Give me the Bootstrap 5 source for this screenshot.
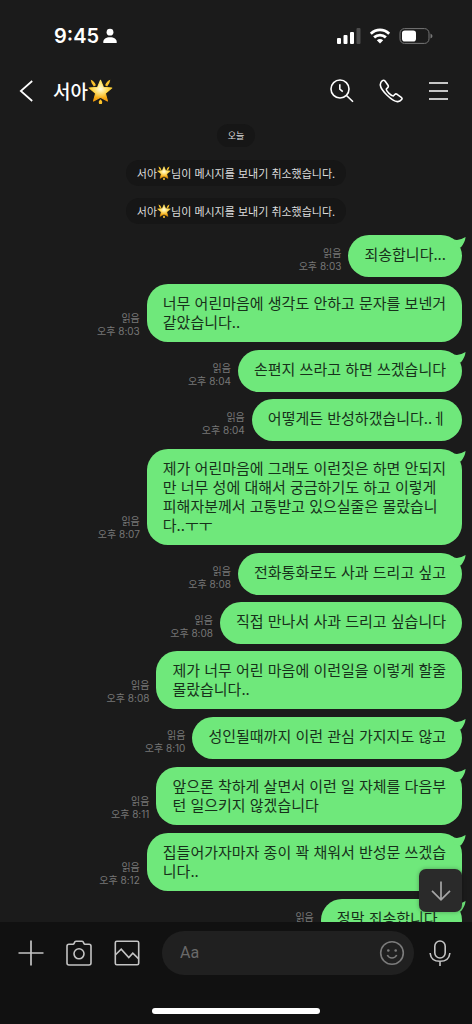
<!DOCTYPE html>
<html lang="ko">
<head>
<meta charset="utf-8">
<meta name="viewport" content="width=device-width, initial-scale=1">
<title>서아</title>
<link href="https://cdn.jsdelivr.net/npm/bootstrap@5.3.0/dist/css/bootstrap.min.css" rel="stylesheet">
<style>
  body { background: #1b1b1b; color: #fff; font-family: "Noto Sans CJK KR", sans-serif; }
  svg { display: block; flex: none; }
  .app-shell { height: 100vh; }
  .icon-btn { background: none; border: 0; padding: 0; color: inherit; display: block; }
  .status-bar { height: 72px; padding: 0 39px 0 54px; }
  .clock { font: 600 20px/24px Inter, sans-serif; }
  .chat-header { height: 38px; padding: 0 23px 0 19px; }
  .chat-name { font-size: 19px; line-height: 28px; font-weight: 500; margin: 0 0 0 19px; }
  .header-actions { gap: 25px; }
  .chat-log { min-height: 0; padding: 14px 10px 0 10px; }
  .notice { background: #161616; color: #dedede; font-size: 11px; line-height: 16px; padding: 5px 11px; border-radius: 13px; }
  .day-pill { background: #161616; color: #dedede; font-size: 9px; line-height: 15px; padding: 4px 11px; border-radius: 12px; margin-bottom: 13px; }
  .notice + .notice { margin-top: 12px; }
  .notices { margin-bottom: 11px; }
  .msg-row { gap: 7px; margin-top: 7px; }
  .msg-row.has-tail { margin-top: 8px; }
  .msg-row:first-child { margin-top: 0; }
  .msg-meta { color: #777; font: 400 10px/13px Inter, "Noto Sans CJK KR", sans-serif; padding-bottom: 4px; }
  .bubble { position: relative; background: #6fe87b; color: #17301a; font-size: 15px; line-height: 19px; padding: 9px 16px 11px; min-height: 42px; border-radius: 21px; white-space: nowrap; margin: 0; }
  .bubble-tail { position: absolute; top: 1px; right: -4px; }
  .jump-btn { position: absolute; right: 10px; bottom: 10px; width: 43px; height: 43px; background: #2a2a2a; border: 0; border-radius: 7px; box-shadow: 0 0 4px rgba(0,0,0,.3); padding: 0; }
  .composer { background: #111; color: #c4c4c4; }
  .composer-bar { padding: 9px 21px 0 18px; }
  .tool-gap { gap: 22px; }
  .msg-box { background: #202020; border-radius: 22px; height: 44px; min-width: 0; margin-left: 22px; margin-right: 15px; padding: 0 9px 0 18px; }
  .msg-box input { background: none; border: 0; outline: 0; color: #fff; width: 100%; min-width: 0; padding: 0; font: 400 16px/20px Roboto, "Noto Sans CJK KR", sans-serif; }
  .msg-box input::placeholder { color: #696969; opacity: 1; }
  .home-bar { width: 168px; height: 6px; border-radius: 3px; background: #fff; margin: 33px auto 10px; }
</style>
</head>
<body>
<svg width="0" height="0" class="position-absolute" aria-hidden="true">
  <defs>
    <linearGradient id="gold" x1="0" y1="0" x2="0" y2="1"><stop offset="0" stop-color="#ffe45c"/><stop offset=".55" stop-color="#ffc928"/><stop offset="1" stop-color="#f29a0c"/></linearGradient>
    <radialGradient id="shine" cx=".5" cy=".42" r=".45"><stop offset="0" stop-color="#fffbe0"/><stop offset="1" stop-color="#fff3a0" stop-opacity="0"/></radialGradient>
    <symbol id="star" viewBox="0 0 24 24">
      <path fill="#fbc22b" d="M2.600.8Q6 2 7.600 6L5.600 7.200Q3 4.500 2.600.8ZM21.400.8Q18 2 16.400 6l2 1.200Q21 4.500 21.400.8ZM12 19.400q2.600 2.200 1.200 4.600h-2.400q-1.400-2.400 1.200-4.600Z"/>
      <path fill="url(#gold)" stroke="url(#gold)" stroke-width="1" stroke-linejoin="round" d="m12 1.200 2.800 6.700 8.100.7-6.200 5.200 2 7.400L12 17.600l-6.700 3.600 2-7.400L1.100 8.600l8.100-.7Z"/>
      <path fill="url(#shine)" d="m12 1.200 2.800 6.700 8.100.7-6.200 5.200 2 7.400L12 17.600l-6.700 3.600 2-7.400L1.100 8.600l8.100-.7Z"/>
    </symbol>
    <symbol id="tail" viewBox="0 0 14 14"><path fill="#6fe87b" d="M0 2.500Q2 4 5 3.900 9.500 3.600 13.600 1 13 6.500 8.800 11.500L2 10Z"/></symbol>
  </defs>
</svg>
<div class="app-shell d-flex flex-column overflow-hidden">
  <header>
    <div class="status-bar d-flex align-items-center justify-content-between">
      <div class="d-flex align-items-center">
        <span class="clock">9:45</span>
        <svg class="ms-1" width="14" height="16" viewBox="0 0 14 16" fill="#fff"><circle cx="7" cy="4.200" r="3.400"/><path d="M.3 15v-1.200C.3 11 3 9.200 7 9.200s6.700 1.800 6.700 4.600V15Z"/></svg>
      </div>
      <div class="d-flex align-items-center">
        <svg width="24" height="16" viewBox="0 0 24 16" fill="#fff"><rect y="10" width="4" height="6" rx="1"/><rect x="6.500" y="7" width="4" height="9" rx="1"/><rect x="13" y="4" width="4" height="12" rx="1"/><rect x="19.500" y="0" width="4" height="16" rx="1" fill="#4c4c4c"/></svg>
        <svg class="ms-2" width="22" height="16" viewBox="0 0 22 16" fill="none" stroke="#fff" stroke-width="2.800"><path d="M1.800 5.700Q6 1.900 11 1.900t9.200 3.800"/><path d="M5.100 9.400Q7.600 7.100 11 7.100t5.900 2.300"/><path fill="#fff" stroke="none" d="M7.800 12.200Q11 10 14.200 12.200L11 15.500Z"/></svg>
        <svg class="ms-2" width="34" height="16" viewBox="0 0 34 16"><rect x="1" y=".6" width="29" height="14.800" rx="4.500" fill="none" stroke="#777"/><rect x="3" y="2.500" width="14" height="11" rx="2.800" fill="#fff"/><path d="M31.500 5.500q2 1 2 2.500t-2 2.500Z" fill="#777"/></svg>
      </div>
    </div>
    <div class="chat-header d-flex align-items-center">
      <button class="icon-btn" aria-label="뒤로"><svg width="15" height="24" viewBox="0 0 15 24" fill="none" stroke="#fff" stroke-width="1.700"><path d="M13.200 2 1.800 12l11.400 10"/></svg></button>
      <h1 class="chat-name d-flex align-items-center">서아<svg width="25" height="25"><use href="#star"/></svg></h1>
      <div class="header-actions d-flex align-items-center ms-auto">
        <button class="icon-btn" aria-label="검색"><svg width="24" height="24" viewBox="0 0 24 24" fill="none" stroke="#fff" stroke-width="1.600"><circle cx="10" cy="10" r="9"/><path d="m16.500 16.500 6.500 6.300M9.800 5.200v5l3 2.500"/></svg></button>
        <button class="icon-btn" aria-label="통화"><svg width="24" height="24" viewBox="0 0 24 24" fill="none" stroke="#fff" stroke-width="1.600" stroke-linejoin="round"><path d="M3.400 1.700Q4.800.7 6 2l3 4.200q.8 1.300-.3 2.500L7.300 10q-.2 1.500 2.700 4.300t4.300 2.700l1.500-1.500q1-1 2.300-.2l4.200 3q1.300 1 .3 2.300-1.700 2.200-4.200 2-4-.2-10.300-6.300T1.300 6.200Q1.100 3.600 3.400 1.700Z"/></svg></button>
        <button class="icon-btn" aria-label="메뉴"><svg width="21" height="24" viewBox="0 0 21 24" fill="none" stroke="#fff" stroke-width="1.600"><path d="M1 4h19M1 12h19M1 20h19"/></svg></button>
      </div>
    </div>
  </header>

  <main class="position-relative flex-grow-1 overflow-hidden chat-log">
    <div class="notices d-flex flex-column align-items-center">
      <div class="day-pill">오늘</div>
      <div class="notice d-flex align-items-center">서아<svg width="14" height="14"><use href="#star"/></svg>님이 메시지를 보내기 취소했습니다.</div>
      <div class="notice d-flex align-items-center">서아<svg width="14" height="14"><use href="#star"/></svg>님이 메시지를 보내기 취소했습니다.</div>
    </div>
    <div>
      <div class="msg-row has-tail d-flex justify-content-end align-items-end"><div class="msg-meta text-end">읽음<br>오후 8:03</div><p class="bubble">죄송합니다...<svg class="bubble-tail" width="14" height="14"><use href="#tail"/></svg></p></div>
      <div class="msg-row d-flex justify-content-end align-items-end"><div class="msg-meta text-end">읽음<br>오후 8:03</div><p class="bubble">너무 어린마음에 생각도 안하고 문자를 보넨거<br>같았습니다..</p></div>
      <div class="msg-row has-tail d-flex justify-content-end align-items-end"><div class="msg-meta text-end">읽음<br>오후 8:04</div><p class="bubble">손편지 쓰라고 하면 쓰겠습니다<svg class="bubble-tail" width="14" height="14"><use href="#tail"/></svg></p></div>
      <div class="msg-row d-flex justify-content-end align-items-end"><div class="msg-meta text-end">읽음<br>오후 8:04</div><p class="bubble">어떻게든 반성하갰습니다..ㅔ</p></div>
      <div class="msg-row has-tail d-flex justify-content-end align-items-end"><div class="msg-meta text-end">읽음<br>오후 8:07</div><p class="bubble">제가 어린마음에 그래도 이런짓은 하면 안되지<br>만 너무 성에 대해서 궁금하기도 하고 이렇게<br>피해자분께서 고통받고 있으실줄은 몰랐습니<br>다..ㅜㅜ<svg class="bubble-tail" width="14" height="14"><use href="#tail"/></svg></p></div>
      <div class="msg-row has-tail d-flex justify-content-end align-items-end"><div class="msg-meta text-end">읽음<br>오후 8:08</div><p class="bubble">전화통화로도 사과 드리고 싶고<svg class="bubble-tail" width="14" height="14"><use href="#tail"/></svg></p></div>
      <div class="msg-row d-flex justify-content-end align-items-end"><div class="msg-meta text-end">읽음<br>오후 8:08</div><p class="bubble">직접 만나서 사과 드리고 싶습니다</p></div>
      <div class="msg-row d-flex justify-content-end align-items-end"><div class="msg-meta text-end">읽음<br>오후 8:08</div><p class="bubble">제가 너무 어린 마음에 이런일을 이렇게 할줄<br>몰랐습니다..</p></div>
      <div class="msg-row has-tail d-flex justify-content-end align-items-end"><div class="msg-meta text-end">읽음<br>오후 8:10</div><p class="bubble">성인될때까지 이런 관심 가지지도 않고<svg class="bubble-tail" width="14" height="14"><use href="#tail"/></svg></p></div>
      <div class="msg-row has-tail d-flex justify-content-end align-items-end"><div class="msg-meta text-end">읽음<br>오후 8:11</div><p class="bubble">앞으론 착하게 살면서 이런 일 자체를 다음부<br>턴 일으키지 않겠습니다<svg class="bubble-tail" width="14" height="14"><use href="#tail"/></svg></p></div>
      <div class="msg-row has-tail d-flex justify-content-end align-items-end"><div class="msg-meta text-end">읽음<br>오후 8:12</div><p class="bubble">집들어가자마자 종이 꽉 채워서 반성문 쓰겠습<br>니다..<svg class="bubble-tail" width="14" height="14"><use href="#tail"/></svg></p></div>
      <div class="msg-row has-tail d-flex justify-content-end align-items-end"><div class="msg-meta text-end">읽음<br>오후 8:12</div><p class="bubble">정말 죄송합니다..<svg class="bubble-tail" width="14" height="14"><use href="#tail"/></svg></p></div>
    </div>
    <button class="jump-btn d-flex align-items-center justify-content-center" aria-label="맨 아래로"><svg width="20" height="20" viewBox="0 0 20 20" fill="none" stroke="#a5a5a5" stroke-width="1.700"><path d="M10 .5v18M1 9.800l9 9 9-9"/></svg></button>
  </main>

  <footer class="composer">
    <div class="composer-bar d-flex align-items-center">
      <div class="tool-gap d-flex align-items-center">
        <button class="icon-btn" aria-label="추가"><svg width="26" height="26" viewBox="0 0 26 26" fill="none" stroke="currentColor" stroke-width="1.700"><path d="M13 .5v25M.5 13h25"/></svg></button>
        <button class="icon-btn" aria-label="카메라"><svg width="26" height="26" viewBox="0 0 26 26" fill="none" stroke="currentColor" stroke-width="1.600"><path d="M3 4.200h4.200q1-.3 1.300-1.700.3-1.200 1.500-1.200h6q1.200 0 1.500 1.200.3 1.400 1.300 1.700H23q2 0 2 2V23q0 2-2 2H3q-2 0-2-2V6.200q0-2 2-2Z"/><circle cx="13" cy="13.800" r="5"/></svg></button>
        <button class="icon-btn" aria-label="사진"><svg width="26" height="26" viewBox="0 0 26 26" fill="none" stroke="currentColor" stroke-width="1.600"><rect x="1.300" y="1.300" width="23.400" height="23.400" rx="1.500"/><path d="m1.500 14.800 5.700-5.600 7.600 8.300 4-4.300 5.900 5.600"/></svg></button>
      </div>
      <div class="msg-box d-flex align-items-center flex-grow-1">
        <input type="text" placeholder="Aa" aria-label="메시지 입력">
        <button class="icon-btn" aria-label="스티커"><svg width="26" height="26" viewBox="0 0 26 26" fill="none" stroke="#7b7b7b" stroke-width="1.600"><circle cx="13" cy="13" r="11.300"/><path d="M8.300 15q1.500 3 4.700 3t4.700-3"/><g fill="#7b7b7b" stroke="none"><circle cx="9.300" cy="10.500" r="1.300"/><circle cx="16.700" cy="10.500" r="1.300"/></g></svg></button>
      </div>
      <button class="icon-btn" aria-label="음성 메시지"><svg width="22" height="26" viewBox="0 0 22 26" fill="none" stroke="currentColor" stroke-width="1.600"><rect x="5.800" y="1" width="10.400" height="17" rx="5.200"/><path d="M1.200 13v.5Q2 21.300 11 21.300t9.800-7.800V13M11 21.300V26"/></svg></button>
    </div>
    <div class="home-bar"></div>
  </footer>
</div>
<script src="https://cdn.jsdelivr.net/npm/bootstrap@5.3.0/dist/js/bootstrap.bundle.min.js"></script>
</body>
</html>
